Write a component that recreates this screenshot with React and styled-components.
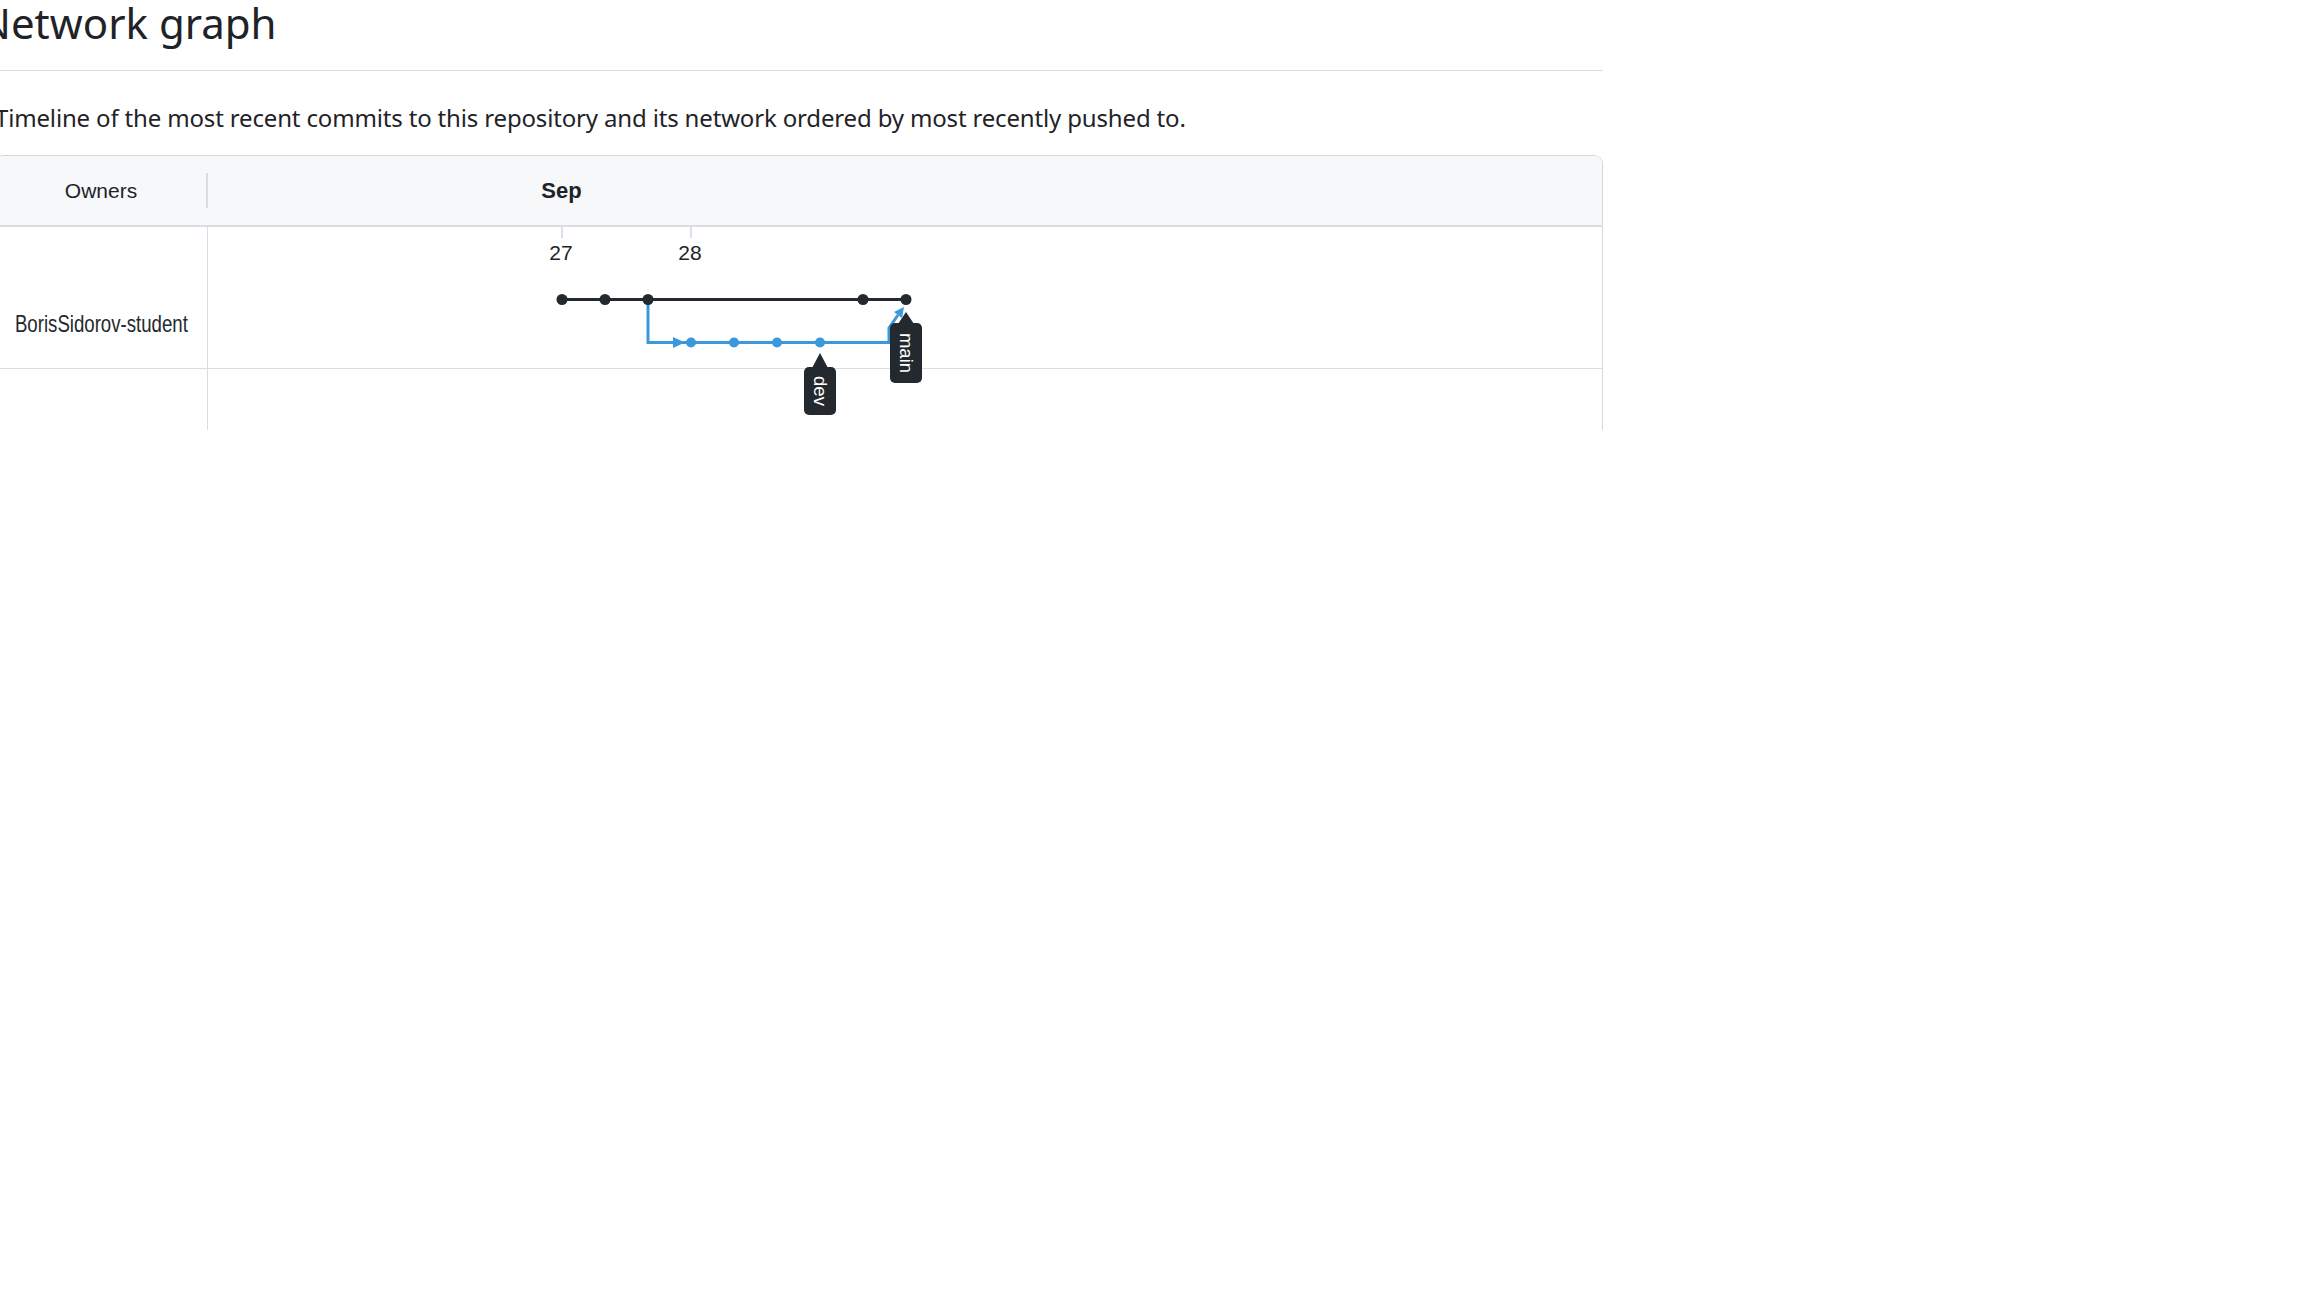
import React from 'react'
import styled, { createGlobalStyle } from 'styled-components'

const GlobalStyle = createGlobalStyle`
  *, *::before, *::after { box-sizing: border-box; }
  html, body {
    margin: 0;
    padding: 0;
    background: #ffffff;
    overflow: hidden;
  }
  body {
    font-family: "Noto Sans", "Open Sans", sans-serif;
    color: #1f2328;
  }
`

const STEP = 43
const X0 = 354
const MAIN_Y = 72.5
const DEV_Y = 115.5
const BLUE = '#3b98dd'
const DARK = '#24292f'

const slotX = (slot) => X0 + slot * STEP

const days = [
  { label: '27', slot: 0 },
  { label: '28', slot: 3 },
]
const mainCommits = [0, 1, 2, 7, 8]
const devCommits = [3, 4, 5, 6]

const Page = styled.div`
  width: 1608px;
  margin-left: -5px;
`

const Subhead = styled.div`
  padding-bottom: 21px;
  border-bottom: 1.5px solid #d8dee4;
`

const Heading = styled.h2`
  margin: -3px 0 0 -16px;
  font-size: 42px;
  font-weight: 400;
  line-height: 52px;
  white-space: nowrap;
`

const Description = styled.p`
  margin: 29px 0 19px;
  font-size: 24px;
  line-height: 36px;
  letter-spacing: -0.16px;
  white-space: nowrap;
`

const GraphBox = styled.div`
  height: 275px;
  border: 1.5px solid #d0d7de;
  border-bottom: 0;
  border-radius: 9px 9px 0 0;
  display: flex;
  flex-direction: column;
  font-family: "Liberation Sans", Arial, sans-serif;
  color: #1f2328;
`

const GraphHeader = styled.div`
  height: 71px;
  flex: 0 0 auto;
  display: flex;
  align-items: center;
  background: #f6f8fa;
  border-bottom: 2px solid #d8dee4;
  border-radius: 7.5px 7.5px 0 0;
`

const OwnersHead = styled.div`
  width: 210px;
  text-align: center;
  font-size: 21px;
`

const HeadDivider = styled.div`
  width: 1.5px;
  height: 35px;
  background: #d8dee4;
`

const MonthTrack = styled.div`
  flex: 1;
  display: flex;
`

const MonthLabel = styled.span`
  display: inline-block;
  font-size: 22px;
  font-weight: 700;
  transform: translateX(-50%);
`

const GraphBody = styled.div`
  flex: 1;
  display: grid;
  grid-template-columns: 211.5px 1fr;
  grid-template-rows: 142px 1fr;
`

const OwnerCell = styled.div`
  display: flex;
  justify-content: center;
  padding-top: 83px;
  border-right: 1.5px solid #d8dee4;
  border-bottom: ${(p) => (p.$divided ? '1.5px solid #d8dee4' : '0')};
`

const OwnerName = styled.span`
  display: inline-block;
  font-size: 24px;
  line-height: 28px;
  color: ${DARK};
  white-space: nowrap;
  transform: scaleX(0.776);
`

const GraphCell = styled.div`
  position: relative;
  border-bottom: ${(p) => (p.$divided ? '1.5px solid #d8dee4' : '0')};
`

const GraphSvg = styled.svg`
  position: relative;
  z-index: 1;
  display: block;
  overflow: visible;
  font-family: "Liberation Sans", Arial, sans-serif;
`

function BranchTag({ x, apex, top, height, name }) {
  const mid = top + height / 2
  return (
    <g>
      <polygon points={`${x},${apex} ${x - 8},${top + 1} ${x + 8},${top + 1}`} fill={DARK} />
      <rect x={x - 16} y={top} width={32} height={height} rx={5} fill={DARK} />
      <text
        x={x}
        y={mid}
        fill="#ffffff"
        fontSize="18.5"
        textAnchor="middle"
        dominantBaseline="central"
        transform={`rotate(90 ${x} ${mid})`}
      >
        {name}
      </text>
    </g>
  )
}

function NetworkGraph() {
  const forkX = slotX(2)
  const mergeX = 681
  return (
    <GraphSvg width="100%" height="140">
      {days.map((d) => (
        <g key={d.label}>
          <line x1={slotX(d.slot)} y1={0} x2={slotX(d.slot)} y2={11} stroke="#d0d7de" strokeWidth="1.5" />
          <text x={slotX(d.slot) - 1} y={33} fontSize="21" fill="#1f2328" textAnchor="middle">
            {d.label}
          </text>
        </g>
      ))}

      <line x1={slotX(0)} y1={MAIN_Y} x2={slotX(8)} y2={MAIN_Y} stroke={DARK} strokeWidth="3" />

      <path
        d={`M${forkX} ${MAIN_Y} V${DEV_Y} H${mergeX} V101 L690 88`}
        fill="none"
        stroke={BLUE}
        strokeWidth="3"
      />
      <polygon points={`465,110 477,${DEV_Y} 465,121`} fill={BLUE} />
      <polygon points="696,80 694,91 686,85" fill={BLUE} />

      {devCommits.map((s) => (
        <circle key={`d${s}`} cx={slotX(s)} cy={DEV_Y} r={5} fill={BLUE} />
      ))}
      {mainCommits.map((s) => (
        <circle key={`m${s}`} cx={slotX(s)} cy={MAIN_Y} r={5.5} fill={DARK} />
      ))}

      <BranchTag x={slotX(6)} apex={126} top={140} height={48} name="dev" />
      <BranchTag x={slotX(8)} apex={85} top={96} height={60} name="main" />
    </GraphSvg>
  )
}

export default function App() {
  return (
    <>
      <GlobalStyle />
      <Page>
        <Subhead>
          <Heading>Network graph</Heading>
        </Subhead>
        <Description>
          Timeline of the most recent commits to this repository and its network ordered by most recently pushed to.
        </Description>
        <GraphBox>
          <GraphHeader>
            <OwnersHead>Owners</OwnersHead>
            <HeadDivider />
            <MonthTrack>
              <MonthLabel style={{ marginLeft: X0 }}>Sep</MonthLabel>
            </MonthTrack>
          </GraphHeader>
          <GraphBody>
            <OwnerCell $divided>
              <OwnerName>BorisSidorov-student</OwnerName>
            </OwnerCell>
            <GraphCell $divided>
              <NetworkGraph />
            </GraphCell>
            <OwnerCell />
            <GraphCell />
          </GraphBody>
        </GraphBox>
      </Page>
    </>
  )
}
